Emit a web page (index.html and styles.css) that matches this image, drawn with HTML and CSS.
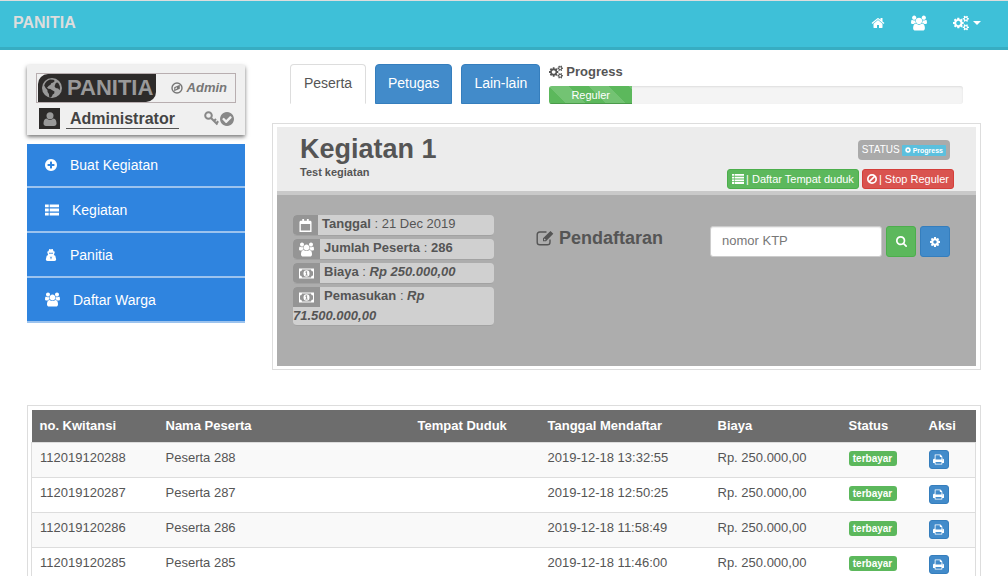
FILE: index.html
```html
<!DOCTYPE html>
<html lang="id">
<head>
<meta charset="utf-8">
<meta name="viewport" content="width=device-width, initial-scale=1">
<title>Panitia</title>
<link rel="stylesheet" href="styles.css">
</head>
<body>
<svg class="sprite" aria-hidden="true">
  <symbol id="home" viewBox="0 0 1792 1792"><path d="M1472 992v480q0 26-19 45t-45 19h-384v-384h-256v384h-384q-26 0-45-19t-19-45v-480q0-1 .5-3t.5-3l575-474 575 474q1 2 1 6zm223-69l-62 74q-8 9-21 11h-3q-13 0-21-7l-692-577-692 577q-12 8-24 7-13-2-21-11l-62-74q-8-10-7-23.500t11-21.500l719-599q32-26 76-26t76 26l244 204v-195q0-14 9-23t23-9h192q14 0 23 9t9 23v408l219 182q10 8 11 21.500t-7 23.500z"/></symbol>
  <symbol id="users" viewBox="-64 0 1920 1792"><path d="M529 896q-162 5-265 128h-134q-82 0-138-40.500t-56-118.500q0-353 124-353 6 0 43.500 21t97.500 42.500 119 21.500q67 0 133-23-5 37-5 66 0 139 81 256zm1071 637q0 120-73 189.500t-194 69.500h-874q-121 0-194-69.500t-73-189.500q0-53 3.500-103.500t14-109 26.500-108.500 43-97.500 62-81 85.500-53.500 111.500-20q10 0 43 21.500t73 48 107 48 135 21.500 135-21.500 107-48 73-48 43-21.500q61 0 111.500 20t85.500 53.500 62 81 43 97.500 26.500 108.500 14 109 3.500 103.500zm-1024-1277q0 106-75 181t-181 75-181-75-75-181 75-181 181-75 181 75 75 181zm704 384q0 159-112.500 271.500t-271.500 112.500-271.500-112.500-112.500-271.500 112.500-271.500 271.500-112.500 271.500 112.500 112.500 271.500zm576 225q0 78-56 118.500t-138 40.500h-134q-103-123-265-128 81-117 81-256 0-29-5-66 66 23 133 23 59 0 119-21.500t97.500-42.500 43.500-21q124 0 124 353zm-128-609q0 106-75 181t-181 75-181-75-75-181 75-181 181-75 181 75 75 181z"/></symbol>
  <symbol id="cogs" viewBox="-64 0 1920 1792"><path d="M832 896q0-106-75-181t-181-75-181 75-75 181 75 181 181 75 181-75 75-181zm768 512q0-52-38-90t-90-38-90 38-38 90q0 53 37.500 90.500t90.500 37.500 90.500-37.500 37.500-90.500zm0-1024q0-52-38-90t-90-38-90 38-38 90q0 53 37.500 90.500t90.500 37.500 90.500-37.500 37.500-90.500zm-384 421v185q0 10-7 19.500t-16 10.500l-155 24q-11 35-32 76 34 48 90 115 7 11 7 20 0 12-7 19-23 30-82.500 89.500t-78.500 59.500q-11 0-21-7l-115-90q-37 19-77 31-11 108-23 155-7 24-30 24h-186q-11 0-20-7.500t-10-17.500l-23-153q-34-10-75-31l-118 89q-7 7-20 7-11 0-21-8-144-133-144-160 0-9 7-19 10-14 41-53t47-61q-23-44-35-82l-152-24q-10-1-17-9.500t-7-19.500v-185q0-10 7-19.500t16-10.500l155-24q11-35 32-76-34-48-90-115-7-11-7-20 0-12 7-20 22-30 82-89t79-59q11 0 21 7l115 90q34-18 77-32 11-108 23-154 7-24 30-24h186q11 0 20 7.500t10 17.500l23 153q34 10 75 31l118-89q8-7 20-7 11 0 21 8 144 133 144 160 0 8-7 19-12 16-42 54t-45 60q23 48 34 82l152 23q10 2 17 10.500t7 19.500zm640 533v140q0 16-149 31-12 27-30 52 51 113 51 138 0 4-4 7-122 71-124 71-8 0-46-47t-52-68q-20 2-30 2t-30-2q-14 21-52 68t-46 47q-2 0-124-71-4-3-4-7 0-25 51-138-18-25-30-52-149-15-149-31v-140q0-16 149-31 13-29 30-52-51-113-51-138 0-4 4-7 4-2 35-20t59-34 30-16q8 0 46 46.500t52 67.500q20-2 30-2t30 2q51-71 92-112l6-2q4 0 124 70 4 3 4 7 0 25-51 138 17 23 30 52 149 15 149 31zm0-1024v140q0 16-149 31-12 27-30 52 51 113 51 138 0 4-4 7-122 71-124 71-8 0-46-47t-52-68q-20 2-30 2t-30-2q-14 21-52 68t-46 47q-2 0-124-71-4-3-4-7 0-25 51-138-18-25-30-52-149-15-149-31v-140q0-16 149-31 13-29 30-52-51-113-51-138 0-4 4-7 4-2 35-20t59-34 30-16q8 0 46 46.500t52 67.500q20-2 30-2t30 2q51-71 92-112l6-2q4 0 124 70 4 3 4 7 0 25-51 138 17 23 30 52 149 15 149 31z"/></symbol>
  <symbol id="cog" viewBox="128 128 1536 1536"><path d="M1152 896q0-106-75-181t-181-75-181 75-75 181 75 181 181 75 181-75 75-181zm512-109v222q0 12-8 23t-20 13l-185 28q-19 54-39 91 35 50 107 138 10 12 10 25t-9 23q-27 37-99 108t-94 71q-12 0-26-9l-138-108q-44 23-91 38-16 136-29 186-7 28-36 28h-222q-14 0-24.500-8.500t-11.500-21.500l-28-184q-49-16-90-37l-141 107q-10 9-25 9-14 0-25-11-126-114-165-168-7-10-7-23 0-12 8-23 15-21 51-66.500t54-70.500q-27-50-41-99l-183-27q-13-2-21-12.500t-8-23.500v-222q0-12 8-23t19-13l186-28q14-46 39-92-40-57-107-138-10-12-10-24 0-10 9-23 26-36 98.500-107.500t94.500-71.500q13 0 26 10l138 107q44-23 91-38 16-136 29-186 7-28 36-28h222q14 0 24.500 8.500t11.500 21.500l28 184q49 16 90 37l142-107q9-9 24-9 13 0 25 10 129 119 165 170 7 8 7 22 0 12-8 23-15 21-51 66.500t-54 70.500q26 50 41 98l183 28q13 2 21 12.500t8 23.500z"/></symbol>
  <symbol id="plus" viewBox="128 128 1536 1536"><path d="M1344 960v-128q0-26-19-45t-45-19h-256v-256q0-26-19-45t-45-19h-128q-26 0-45 19t-19 45v256h-256q-26 0-45 19t-19 45v128q0 26 19 45t45 19h256v256q0 26 19 45t45 19h128q26 0 45-19t19-45v-256h256q26 0 45-19t19-45zm320-64q0 209-103 385.500t-279.500 279.500-385.500 103-385.500-103-279.500-279.500-103-385.500 103-385.500 279.500-279.500 385.500-103 385.500 103 279.500 279.500 103 385.500z"/></symbol>
  <symbol id="check" viewBox="128 128 1536 1536"><path d="M1412 734q0-28-18-46l-91-90q-19-19-45-19t-45 19l-408 407-226-226q-19-19-45-19t-45 19l-91 90q-18 18-18 46 0 27 18 45l362 362q19 19 45 19 27 0 46-19l543-543q18-18 18-45zm252 162q0 209-103 385.500t-279.500 279.500-385.500 103-385.500-103-279.500-279.500-103-385.500 103-385.500 279.500-279.500 385.500-103 385.500 103 279.500 279.500 103 385.500z"/></symbol>
  <symbol id="search" viewBox="64 128 1664 1664"><path d="M1216 832q0-185-131.500-316.500t-316.500-131.500-316.500 131.500-131.500 316.500 131.500 316.500 316.500 131.500 316.500-131.500 131.500-316.500zm512 832q0 52-38 90t-90 38q-54 0-90-38l-343-342q-179 124-399 124-143 0-273.500-55.500t-225-150-150-225-55.500-273.500 55.500-273.500 150-225 225-150 273.500-55.500 273.500 55.500 225 150 150 225 55.500 273.500q0 220-124 399l343 343q37 37 37 90z"/></symbol>
  <symbol id="print" viewBox="64 128 1664 1536"><path d="M448 1536h896v-256h-896v256zm0-640h896v-384h-160q-40 0-68-28t-28-68v-160h-640v640zm1152 64q0-26-19-45t-45-19-45 19-19 45 19 45 45 19 45-19 19-45zm128 0v416q0 13-9.500 22.500t-22.500 9.500h-224v160q0 40-28 68t-68 28h-960q-40 0-68-28t-28-68v-160h-224q-13 0-22.500-9.500t-9.500-22.500v-416q0-79 56.500-135.500t135.500-56.500h64v-544q0-40 28-68t68-28h672q40 0 88 20t76 48l152 152q28 28 48 76t20 88v256h64q79 0 135.500 56.500t56.500 135.500z"/></symbol>
  <symbol id="th-list" viewBox="0 0 15 12"><path d="M0 0h4v3H0zM5 0h10v3H5zM0 4.500h4v3H0zM5 4.500h10v3H5zM0 9h4v3H0zM5 9h10v3H5z"/></symbol>
  <symbol id="list" viewBox="0 0 12 10"><path d="M0 0h2v1.800H0zM2.600 0H12v1.800H2.600zM0 2.700h2v1.800H0zM2.600 2.700H12v1.800H2.600zM0 5.400h2v1.800H0zM2.600 5.400H12v1.800H2.600zM0 8.100h2v1.800H0zM2.600 8.100H12v1.800H2.600z"/></symbol>
  <symbol id="ban" viewBox="0 0 12 12"><g fill="none" stroke="currentColor" stroke-width="2"><circle cx="6" cy="6" r="5"/><path d="M2.500 9.500l7-7"/></g></symbol>
  <symbol id="globe" viewBox="0 0 20 20"><circle cx="10" cy="10" r="10"/><path fill="#2d2b2a" d="M8 1.500l3.500.3 1.300 1.300-1.600 1.500-2 .6-.7 1.600-1.700 1-1.800 1.900 1.300 1 2 .3 2.400 1.400 1.800 1.200-.3 1.800-1.500 1.200-.8 2-1.600 1-1-.3-.4-3.200-1.300-2-.2-2.200L3.600 10l-1.400-2.600C3 4.600 5 2.500 8 1.500zM13.500 5.500l1.300-1 1.200.2c1.200 1.400 2 3.300 2 5.300l-.5 2.200-1.300-1.800-2.500-.4-1.200-1.700.8-2z"/></symbol>
  <symbol id="user" viewBox="0 0 13 14"><circle cx="6.500" cy="3.700" r="3.500"/><path d="M3 6.500q3.500 2.800 7 0c2 0 3 2.500 3 5 0 1.500-1 2.500-2.500 2.500h-8C1 14 0 13 0 11.500c0-2.500 1-5 3-5z"/></symbol>
  <symbol id="key" viewBox="0 0 15 15"><g fill="none" stroke="currentColor" stroke-width="2"><circle cx="4.500" cy="4.500" r="3.300"/><path d="M7 7l6.500 6.500M10 10l2-2M12.300 12.300l2-2"/></g></symbol>
  <symbol id="compass" viewBox="0 0 12 12"><circle cx="6" cy="6" r="5" fill="none" stroke="currentColor" stroke-width="1.400"/><path d="M8.800 2.700v4L3.200 9.300v-4zM4.400 6v1.400l1.600-.8V5.200z" fill-rule="evenodd"/></symbol>
  <symbol id="secret" viewBox="0 0 12 14"><path d="M4 0c1 0 1.300.5 2 .5S7 0 8 0l1 2.700 1.500.5v1H10c0 1.500-.3 2-.8 2.700L11 8l1 4c0 1-.6 2-2 2H2c-1.400 0-2-1-2-2l1-4 1.800-1.100C2.300 6.200 2 5.700 2 4.200h-.5v-1L3 2.700z"/><path fill="#2f84df" d="M3.500 4.300h2l.5.300.5-.3h2L8 5.500H6.500L6 5l-.5.500H4zM4.700 8.500l1 1-.5 3zM7.300 8.500l-1 1 .5 3z"/></symbol>
  <symbol id="calendar" viewBox="0 0 13 14"><path fill-rule="evenodd" d="M1 2h2V0h2v2h3V0h2v2h2l1 1v11H0V3zM1.500 5.500v7h10v-7z"/></symbol>
  <symbol id="money" viewBox="0 0 15 10"><path fill-rule="evenodd" d="M0 0h15v10H0zM3 1Q3 3 1 3v4q2 0 2 2h9q0-2 2-2V3q-2 0-2-2z"/><path fill-rule="evenodd" d="M7.500 1.700a3 3.300 0 0 0 0 6.600 3 3.300 0 0 0 0-6.600zM6.200 3.600l1-.8h.9v3.400h.7V7H6.300v-.8h.8V4l-.6.300z"/></symbol>
  <symbol id="edit" viewBox="0 0 18 16"><path d="M10.500 2H3.800Q1.200 2 1.200 4.600v7.600q0 2.600 2.600 2.600h7.600q2.600 0 2.600-2.600V9.500" fill="none" stroke="currentColor" stroke-width="1.400"/><path d="M14.500 1l2.800 2.800L10 11.200H7V8.300zM8 9v1.300h1.300l.5-.6L8.500 8.400z" fill-rule="evenodd"/></symbol>
</svg>

<header class="navbar">
  <a class="navbar-brand" href="#">PANITIA</a>
  <nav class="navbar-links">
    <a href="#" aria-label="Beranda"><svg class="icon i14"><use href="#home"/></svg></a>
    <a href="#" aria-label="Warga"><svg class="icon i16"><use href="#users"/></svg></a>
    <a href="#" aria-label="Pengaturan"><svg class="icon i16"><use href="#cogs"/></svg><span class="caret"></span></a>
  </nav>
</header>

<div class="page">
  <div class="top">
    <aside class="sidebar">
      <section class="profile">
        <div class="profile-head">
          <span class="profile-brand"><svg class="icon i20"><use href="#globe"/></svg>PANITIA</span>
          <em class="profile-role"><svg class="icon i12"><use href="#compass"/></svg>Admin</em>
        </div>
        <div class="profile-user">
          <span class="avatar"><svg class="icon i14"><use href="#user"/></svg></span>
          <a class="profile-name" href="#">Administrator</a>
          <span class="profile-tools"><svg class="icon i15"><use href="#key"/></svg><svg class="icon i14"><use href="#check"/></svg></span>
        </div>
      </section>
      <nav class="menu">
        <a href="#"><svg class="icon i12"><use href="#plus"/></svg>Buat Kegiatan</a>
        <a href="#"><svg class="icon i14"><use href="#th-list"/></svg>Kegiatan</a>
        <a href="#"><svg class="icon i12"><use href="#secret"/></svg>Panitia</a>
        <a href="#"><svg class="icon i15"><use href="#users"/></svg>Daftar Warga</a>
      </nav>
    </aside>

    <main class="main">
      <div class="toolbar">
        <nav class="tabs">
          <a class="tab active" href="#">Peserta</a>
          <a class="tab" href="#">Petugas</a>
          <a class="tab" href="#">Lain-lain</a>
        </nav>
        <div class="progress-box">
          <div class="progress-label"><svg class="icon i14"><use href="#cogs"/></svg>Progress</div>
          <div class="progress"><div class="progress-bar" style="width:20%">Reguler</div></div>
        </div>
      </div>

      <section class="frame">
        <header class="event-head">
          <div>
            <h1>Kegiatan 1</h1>
            <p class="event-note">Test kegiatan</p>
          </div>
          <div class="event-side">
            <div class="status">STATUS <span class="status-badge"><svg class="icon i6"><use href="#cog"/></svg>Progress</span></div>
            <div class="event-actions">
              <button class="btn green" type="button"><svg class="icon i12"><use href="#list"/></svg>| Daftar Tempat duduk</button>
              <button class="btn red" type="button"><svg class="icon i10"><use href="#ban"/></svg>| Stop Reguler</button>
            </div>
          </div>
        </header>
        <div class="event-body">
          <ul class="facts">
            <li><span class="fact-icon"><svg class="icon i13"><use href="#calendar"/></svg></span><b>Tanggal</b> : 21 Dec 2019</li>
            <li><span class="fact-icon"><svg class="icon i15"><use href="#users"/></svg></span><b>Jumlah Peserta</b> : <b>286</b></li>
            <li><span class="fact-icon"><svg class="icon i15"><use href="#money"/></svg></span><b>Biaya</b> : <b><i>Rp 250.000,00</i></b></li>
            <li><span class="fact-icon"><svg class="icon i15"><use href="#money"/></svg></span><b>Pemasukan</b> : <b><i>Rp 71.500.000,00</i></b></li>
          </ul>
          <form class="register">
            <label class="register-title" for="ktp"><svg class="icon i18"><use href="#edit"/></svg>Pendaftaran</label>
            <input id="ktp" type="text" placeholder="nomor KTP">
            <button class="square green" type="button" aria-label="Cari"><svg class="icon i11"><use href="#search"/></svg></button>
            <button class="square blue" type="button" aria-label="Pengaturan"><svg class="icon i10"><use href="#cog"/></svg></button>
          </form>
        </div>
      </section>
    </main>
  </div>

  <section class="frame table-frame">
    <table class="list">
      <colgroup><col class="c-no"><col><col class="c-seat"><col class="c-date"><col class="c-fee"><col class="c-status"><col class="c-action"></colgroup>
      <thead>
        <tr><th>no. Kwitansi</th><th>Nama Peserta</th><th>Tempat Duduk</th><th>Tanggal Mendaftar</th><th>Biaya</th><th>Status</th><th>Aksi</th></tr>
      </thead>
      <tbody>
        <tr><td>112019120288</td><td>Peserta 288</td><td></td><td>2019-12-18 13:32:55</td><td>Rp. 250.000,00</td><td><span class="paid">terbayar</span></td><td><button class="print" type="button" aria-label="Cetak"><svg class="icon i11"><use href="#print"/></svg></button></td></tr>
        <tr><td>112019120287</td><td>Peserta 287</td><td></td><td>2019-12-18 12:50:25</td><td>Rp. 250.000,00</td><td><span class="paid">terbayar</span></td><td><button class="print" type="button" aria-label="Cetak"><svg class="icon i11"><use href="#print"/></svg></button></td></tr>
        <tr><td>112019120286</td><td>Peserta 286</td><td></td><td>2019-12-18 11:58:49</td><td>Rp. 250.000,00</td><td><span class="paid">terbayar</span></td><td><button class="print" type="button" aria-label="Cetak"><svg class="icon i11"><use href="#print"/></svg></button></td></tr>
        <tr><td>112019120285</td><td>Peserta 285</td><td></td><td>2019-12-18 11:46:00</td><td>Rp. 250.000,00</td><td><span class="paid">terbayar</span></td><td><button class="print" type="button" aria-label="Cetak"><svg class="icon i11"><use href="#print"/></svg></button></td></tr>
      </tbody>
    </table>
  </section>
</div>
</body>
</html>
```
FILE: styles.css
```css
* { box-sizing: border-box; }
html { scrollbar-width: none; }
body {
  margin: 0;
  background: #fff;
  color: #555;
  font: 13px/18px "Liberation Sans", Arial, sans-serif;
}
a { color: inherit; text-decoration: none; }
button, input { font: inherit; }
h1, p, ul { margin: 0; padding: 0; }
.sprite { display: none; }

.icon { display: block; flex: none; fill: currentColor; }
.i6 { width: 6px; height: 6px; }
.i10 { width: 10px; height: 10px; }
.i11 { width: 11px; height: 11px; }
.i12 { width: 12px; height: 12px; }
.i13 { width: 13px; height: 13px; }
.i14 { width: 14px; height: 14px; }
.i15 { width: 15px; height: 15px; }
.i16 { width: 16px; height: 16px; }
.i18 { width: 18px; height: 18px; }
.i20 { width: 20px; height: 20px; }

.navbar {
  display: flex;
  align-items: center;
  justify-content: space-between;
  height: 50px;
  padding: 0 27px 2px 13px;
  background: #3ec0d8;
  border-top: 1px solid #ddd;
  border-bottom: 3px solid #37adc2;
}
.navbar-brand { color: #ddd; font-size: 16px; font-weight: bold; }
.navbar-links { display: flex; gap: 26px; color: #fff; }
.navbar-links a { display: flex; align-items: center; gap: 4px; }
.caret {
  border: 4px solid transparent;
  border-top-color: #fff;
  border-bottom: 0;
}

.page { padding: 14px 27px 0; }
.top { display: flex; gap: 27px; margin-bottom: 35px; }
.sidebar { flex: none; width: 218px; padding-top: 1px; }
.main { flex: 1; min-width: 0; }

.profile {
  margin-bottom: 9px;
  padding: 8px 9px 6px;
  background: #f0f0f0;
  box-shadow: 0 2px 4px #777;
}
.profile-head {
  display: flex;
  justify-content: space-between;
  align-items: stretch;
  height: 30px;
  padding-left: 1px;
  border: 1px solid #b8aeb0;
}
.profile-brand {
  display: flex;
  align-items: center;
  gap: 5px;
  padding: 0 3px 0 4px;
  border-radius: 10px 0;
  background: #2d2b2a;
  color: #999;
  font-size: 22px;
  font-weight: bold;
}
.profile-role {
  display: flex;
  align-items: center;
  gap: 4px;
  padding-right: 8px;
  color: #777;
  font-weight: bold;
}
.profile-user { display: flex; align-items: center; padding: 5px 0 0 3px; }
.avatar {
  display: grid;
  place-items: center;
  width: 21px;
  height: 21px;
  background: #2d2b2a;
  color: #999;
}
.profile-name {
  margin-left: 6px;
  padding: 1px 4px 0;
  border-bottom: 1px solid #555;
  color: #444;
  font-size: 16px;
  font-weight: bold;
}
.profile-tools { display: flex; align-items: center; gap: 1px; margin-left: auto; padding-right: 2px; color: #888; }

.menu a {
  display: flex;
  align-items: center;
  gap: 13px;
  height: 45px;
  padding-left: 18px;
  border-bottom: 2px solid #9cc3ee;
  background: #2f84df;
  color: #fff;
  font-size: 14px;
}
.menu a:first-child { height: 44px; }

.toolbar { display: flex; gap: 9px; padding: 0 18px; margin-bottom: 19px; }
.tabs { display: flex; gap: 9px; }
.tab {
  min-width: 76px;
  padding: 9px 12px 10px;
  border: 1px solid #357ebd;
  border-radius: 4px 4px 0 0;
  background: #428bca;
  color: #fff;
  font-size: 14px;
  text-align: center;
}
.tab.active {
  border-color: #ddd;
  border-bottom-color: transparent;
  background: #fff;
  color: #555;
}
.progress-box { flex: 1; }
.progress-label {
  display: flex;
  align-items: center;
  gap: 3px;
  height: 15px;
  margin-bottom: 7px;
  font-weight: bold;
}
.progress {
  height: 18px;
  border-radius: 3px;
  overflow: hidden;
  background: #f4f4f4;
  box-shadow: inset 0 1px 2px #ddd;
}
.progress-bar {
  height: 18px;
  background: linear-gradient(45deg, #73c373 25%, #5cb85c 25% 50%, #73c373 50% 75%, #5cb85c 75%) 0 0 / 40px 40px;
  box-shadow: inset 0 -1px #4a9a4a;
  color: #fff;
  font-size: 11px;
  text-align: center;
}

.frame { padding: 3px 4px; border: 1px solid #ddd; }
.table-frame { padding: 4px 4px 4px 3px; }
.event-head {
  display: flex;
  justify-content: space-between;
  height: 68px;
  padding: 7px 22px 0 23px;
  border-bottom: 4px solid #c9c9c9;
  background: #ececec;
}
h1 { font-size: 27px; line-height: 30px; }
.event-note { font-size: 11px; font-weight: bold; line-height: 16px; }
.event-side {
  display: flex;
  flex-direction: column;
  align-items: flex-end;
  gap: 9px;
  padding-top: 6px;
}
.status {
  display: flex;
  align-items: center;
  gap: 2px;
  height: 20px;
  margin-right: 4px;
  padding: 0 4px;
  border-radius: 4px;
  background: #aaa;
  color: #fff;
  font-size: 10px;
}
.status-badge {
  display: flex;
  align-items: center;
  gap: 2px;
  padding: 0 3px;
  border-radius: 1px;
  background: #5bc0de;
  font-size: 7px;
  font-weight: bold;
  line-height: 11px;
}
.event-actions { display: flex; gap: 3px; }
.btn {
  display: flex;
  align-items: center;
  gap: 2px;
  height: 20px;
  padding: 0 4px;
  border: 1px solid;
  border-radius: 3px;
  color: #fff;
  font-size: 11px;
}
.green { background: #5cb85c; border-color: #4cae4c; }
.red { background: #d9534f; border-color: #d43f3a; }
.blue { background: #428bca; border-color: #357ebd; }

.event-body {
  display: flex;
  gap: 42px;
  min-height: 171px;
  padding: 20px 26px 0 16px;
  background: #adadad;
}
.facts { flex: none; width: 201px; list-style: none; }
.facts li {
  margin-bottom: 3px;
  border-radius: 4px;
  overflow: hidden;
  background: #d0d0d0;
  border-bottom: 1px solid #a2a2a2;
  line-height: 18px;
}
.fact-icon {
  display: inline-grid;
  place-items: center;
  height: 20px;
  margin-right: 4px;
  padding: 0 6px;
  background: #959595;
  color: #fff;
  vertical-align: middle;
}
.register { display: flex; align-items: center; flex: 1; height: 31px; margin-top: 11px; gap: 4px; }
.register-title {
  display: flex;
  align-items: center;
  gap: 5px;
  margin-right: auto;
  padding-bottom: 8px;
  font-size: 18px;
  font-weight: bold;
}
.register input {
  width: 172px;
  height: 31px;
  padding: 0 11px 2px;
  border: 1px solid #ccc;
  border-radius: 3px;
  background: #fff;
  box-shadow: inset 0 1px 1px #eee;
  color: #555;
}
.register input::placeholder { color: #777; }
.square {
  display: grid;
  place-items: center;
  width: 30px;
  height: 31px;
  padding: 0;
  border-width: 1px;
  border-style: solid;
  border-radius: 3px;
  color: #fff;
}

.list { width: 100%; table-layout: fixed; border-collapse: collapse; }
.c-no { width: 126px; }
.c-seat { width: 130px; }
.c-date { width: 170px; }
.c-fee { width: 131px; }
.c-status { width: 80px; }
.c-action { width: 55px; }
.list th {
  height: 32px;
  padding: 0 8px;
  background: #6d6d6d;
  color: #fff;
  text-align: left;
}
.list td { height: 35px; padding: 6px 8px 0; border-top: 1px solid #ddd; vertical-align: top; }
.list tbody { border: 1px solid #ddd; }
.list tbody tr:nth-child(odd) { background: #f9f9f9; }
.paid {
  display: block;
  width: 48px;
  margin-top: 2px;
  border-radius: 3px;
  background: #5cb85c;
  color: #fff;
  font-size: 10px;
  font-weight: bold;
  line-height: 15px;
  text-align: center;
}
.print {
  display: grid;
  place-items: center;
  width: 20px;
  height: 19px;
  margin-top: 1px;
  padding: 0;
  border: 1px solid #357ebd;
  border-radius: 3px;
  background: #428bca;
  color: #fff;
}
```
